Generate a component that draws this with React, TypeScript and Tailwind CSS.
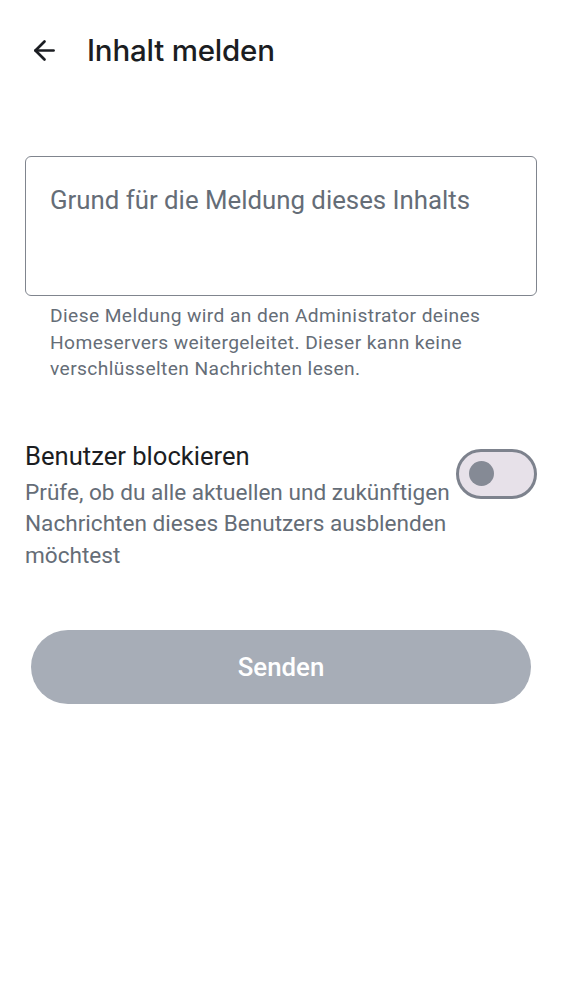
import { ArrowLeft } from 'lucide-react';

export default function App() {
  return (
    <div className="min-h-screen w-full bg-white font-['Roboto',sans-serif] text-[#1b1d22]">
      {/* Top bar */}
      <div className="flex h-[100px] items-center">
        <button className="ml-[28px] flex h-[32px] w-[32px] items-center justify-center text-[#1b1d22]">
          <ArrowLeft size={31} strokeWidth={2.1} />
        </button>
        <h1 className="ml-[27px] font-['Inter',sans-serif] text-[29.5px] font-medium tracking-[-0.2px]">
          Inhalt melden
        </h1>
      </div>

      <div className="px-[25px] pt-[56px]">
        <div className="h-[140px] rounded-[6px] border-[1.5px] border-[#80858e] px-[24px] pt-[26px]">
          <span className="text-[25.8px] leading-[34px] text-[#656d77]">Grund für die Meldung dieses Inhalts</span>
        </div>
        <p className="mt-[7px] px-[25px] text-[19.2px] leading-[26.5px] tracking-[0.4px] text-[#656d77]">
          Diese Meldung wird an den Administrator deines Homeservers weitergeleitet. Dieser kann keine verschlüsselten Nachrichten lesen.
        </p>

        <div className="mt-[56px] flex items-start">
          <div className="flex-1">
            <div className="text-[25.6px] leading-[34px]">Benutzer blockieren</div>
            <div className="mt-[4px] text-[22.6px] leading-[31.8px] text-[#656d77]">
              Prüfe, ob du alle aktuellen und zukünftigen Nachrichten dieses Benutzers ausblenden möchtest
            </div>
          </div>
          <div className="mt-[10px] flex h-[50px] w-[81px] shrink-0 items-center rounded-full border-[3px] border-[#7d828d] bg-[#e7e1e9] pl-[10px]">
            <div className="h-[25px] w-[25px] rounded-full bg-[#858a95]" />
          </div>
        </div>

        <div className="mt-[58px] px-[6px]">
          <button className="flex h-[74px] w-full items-center justify-center rounded-full bg-[#a7adb7] text-[25.8px] font-medium text-white">
            Senden
          </button>
        </div>
      </div>
    </div>
  );
}
